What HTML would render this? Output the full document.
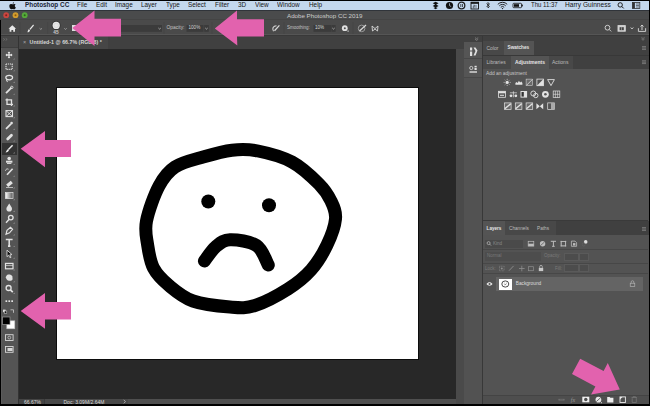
<!DOCTYPE html>
<html><head><meta charset="utf-8">
<style>
*{margin:0;padding:0;box-sizing:border-box}
html,body{width:650px;height:406px;overflow:hidden;background:#000}
body{position:relative;font-family:"Liberation Sans",sans-serif}
.a{position:absolute}
.t{position:absolute;white-space:nowrap;line-height:1;z-index:2}
.top{z-index:3}
.m{font-size:7px;color:#161616;top:1.4px;transform:scaleX(0.91);transform-origin:0 0}
.p{font-size:5px;color:#cfcfcf}
svg{position:absolute;left:0;top:0}
</style></head><body>
<!-- menu bar -->
<div class="a" style="left:0;top:1px;width:649px;height:9px;background:#c4d8ed"></div>
<!-- title bar -->
<div class="a" style="left:0;top:10px;width:649px;height:10px;background:#4a4b4c;border-top:1px solid #30343a;border-bottom:1px solid #444"></div>
<!-- options bar -->
<div class="a" style="left:1px;top:20px;width:648px;height:15px;background:#4a4a4a"></div>
<div class="a" style="left:1px;top:34px;width:648px;height:1px;background:#555"></div>
<div class="a" style="left:1px;top:35px;width:648px;height:1px;background:#393939"></div>
<!-- main area bg -->
<div class="a" style="left:1px;top:36px;width:648px;height:368px;background:#535353"></div>
<!-- toolbar -->
<div class="a" style="left:1px;top:36px;width:17px;height:368px;background:#545454"></div>
<div class="a" style="left:1px;top:48px;width:1px;height:356px;background:#5c5c5c"></div>
<div class="a" style="left:1px;top:36px;width:17px;height:12px;background:#474747;border-bottom:1px solid #3e3e3e"></div>
<div class="a" style="left:18px;top:36px;width:1px;height:368px;background:#333"></div>
<div class="a" style="left:2px;top:143px;width:15px;height:12px;background:#333"></div>
<!-- tab bar -->
<div class="a" style="left:19px;top:36px;width:446px;height:13px;background:#404040"></div>
<div class="a" style="left:19px;top:36px;width:89px;height:13px;background:#464646"></div>
<!-- canvas -->
<div class="a" style="left:19px;top:49px;width:437px;height:350px;background:#282828"></div>
<div class="a" style="left:56px;top:87px;width:363px;height:273px;background:#fff;border:1px solid #0c0c0c"></div>
<!-- status bar -->
<div class="a" style="left:19px;top:399px;width:437px;height:5px;background:#4f4f4f"></div>
<div class="a" style="left:45px;top:399px;width:83px;height:5px;background:#484848"></div>
<div class="a" style="left:19px;top:399px;width:26px;height:5px;background:#444;border-right:1px solid #3a3a3a"></div>
<!-- scroll strip -->
<div class="a" style="left:456px;top:49px;width:8px;height:355px;background:#4a4a4a"></div>
<div class="a" style="left:464px;top:49px;width:1px;height:355px;background:#444"></div>
<!-- icon column -->
<div class="a" style="left:464px;top:36px;width:18px;height:368px;background:#525252"></div>
<div class="a" style="left:464px;top:36px;width:18px;height:6px;background:#404040"></div>
<div class="a" style="left:464px;top:42px;width:18px;height:17px;background:#555;border-bottom:1px solid #484848"></div>
<div class="a" style="left:464px;top:59px;width:18px;height:19px;background:#555;border-bottom:1px solid #484848"></div>
<div class="a" style="left:482px;top:36px;width:1px;height:368px;background:#383838"></div>
<!-- panels -->
<div class="a" style="left:483px;top:36px;width:166px;height:5px;background:#404040"></div>
<!-- color/swatches header -->
<div class="a" style="left:483px;top:41px;width:166px;height:14px;background:#404040"></div>
<div class="a" style="left:483px;top:41px;width:21px;height:14px;background:#484848"></div>
<div class="a" style="left:504px;top:41px;width:30px;height:14px;background:#545454"></div>
<!-- adjustments header -->
<div class="a" style="left:483px;top:55px;width:166px;height:14px;background:#404040;border-top:1px solid #383838"></div>
<div class="a" style="left:483px;top:56px;width:28px;height:13px;background:#484848"></div>
<div class="a" style="left:511px;top:56px;width:38px;height:13px;background:#545454"></div>
<div class="a" style="left:549px;top:56px;width:24px;height:13px;background:#484848"></div>
<!-- adjustments content -->
<div class="a" style="left:483px;top:69px;width:165px;height:152px;background:#535353;border-bottom:1px solid #3a3a3a"></div>
<!-- layers header -->
<div class="a" style="left:483px;top:221px;width:166px;height:14px;background:#404040"></div>
<div class="a" style="left:483px;top:221px;width:22px;height:14px;background:#545454"></div>
<div class="a" style="left:505px;top:221px;width:28px;height:14px;background:#484848"></div>
<div class="a" style="left:533px;top:221px;width:23px;height:14px;background:#484848"></div>
<!-- layers content -->
<div class="a" style="left:483px;top:235px;width:165px;height:160px;background:#535353"></div>
<div class="a" style="left:485px;top:240px;width:38px;height:8px;background:#4a4a4a"></div>
<div class="a" style="left:483px;top:249px;width:165px;height:1px;background:#474747"></div>
<div class="a" style="left:485px;top:252px;width:56px;height:9px;background:#4d4d4d"></div>
<div class="a" style="left:564px;top:252.5px;width:14.5px;height:8px;background:#4c4c4c;border:0.5px solid #5a5a5a"></div>
<div class="a" style="left:579px;top:252.5px;width:9.5px;height:8px;background:#4c4c4c;border:0.5px solid #5a5a5a"></div>
<div class="a" style="left:483px;top:263px;width:165px;height:1px;background:#474747"></div>
<div class="a" style="left:564px;top:264.2px;width:14.5px;height:8px;background:#4c4c4c;border:0.5px solid #5a5a5a"></div>
<div class="a" style="left:579px;top:264.2px;width:9.5px;height:8px;background:#4c4c4c;border:0.5px solid #5a5a5a"></div>
<div class="a" style="left:483px;top:273px;width:165px;height:1px;background:#474747"></div>
<div class="a" style="left:496px;top:277px;width:147px;height:14px;background:#646464"></div>
<div class="a" style="left:498.5px;top:278.5px;width:13.5px;height:11px;background:#fff"></div>
<!-- layers footer -->
<div class="a" style="left:483px;top:395px;width:166px;height:9px;background:#4e4e4e;border-top:1px solid #444"></div>

<!-- ========== TEXT ========== -->
<div class="t m" style="left:24.6px;font-weight:bold;color:#1a2535">Photoshop CC</div>
<div class="t m" style="left:77px">File</div>
<div class="t m" style="left:95.8px">Edit</div>
<div class="t m" style="left:115.2px">Image</div>
<div class="t m" style="left:141.4px">Layer</div>
<div class="t m" style="left:166.4px">Type</div>
<div class="t m" style="left:188.4px">Select</div>
<div class="t m" style="left:215.2px">Filter</div>
<div class="t m" style="left:238px">3D</div>
<div class="t m" style="left:255.2px">View</div>
<div class="t m" style="left:276.8px">Window</div>
<div class="t m" style="left:308.7px">Help</div>
<div class="t m" style="left:531px;transform:scaleX(0.86)">Thu 11:37</div>
<div class="t m" style="left:565px;transform:scaleX(0.94)">Harry Guinness</div>

<div class="t" style="left:287px;top:13.1px;font-size:6.2px;color:#cdcdcd">Adobe Photoshop CC 2019</div>

<div class="t p" style="left:53.3px;top:30.6px;font-size:4.8px;color:#c8c8c8;font-weight:bold">45</div>
<div class="t p" style="left:166.5px;top:25.6px;font-size:4.9px;color:#c4c4c4">Opacity:</div>
<div class="t p" style="left:188.5px;top:25.7px;font-size:4.6px;color:#d8d8d8">100%</div>
<div class="t p" style="left:287.3px;top:25.6px;font-size:4.9px;color:#c4c4c4;transform:scaleX(0.92);transform-origin:0 0">Smoothing:</div>
<div class="t p" style="left:315px;top:25.7px;font-size:4.6px;color:#d8d8d8">10%</div>

<div class="t" style="left:23px;top:39.5px;font-size:5.5px;color:#aaa">×</div>
<div class="t" style="left:29.6px;top:39.7px;font-size:5.3px;font-weight:bold;color:#d6d6d6">Untitled-1 @ 66.7% (RGB/8) *</div>

<div class="t" style="left:24px;top:399.9px;font-size:5px;color:#dadada">66.67%</div>
<div class="t" style="left:63.5px;top:399.9px;font-size:5px;color:#dadada">Doc: 3.09M/2.64M</div>

<div class="t p" style="left:486.5px;top:45.5px;color:#bdbdbd">Color</div>
<div class="t p" style="left:507.5px;top:46.2px;font-weight:bold;color:#e6e6e6;font-size:4.7px">Swatches</div>
<div class="t p" style="left:486.5px;top:59.5px;color:#bdbdbd">Libraries</div>
<div class="t p" style="left:515px;top:60.5px;font-weight:bold;color:#e6e6e6;font-size:4.95px">Adjustments</div>
<div class="t p" style="left:552px;top:59.5px;color:#bdbdbd">Actions</div>
<div class="t p" style="left:486px;top:72.3px;color:#c8c8c8;font-size:4.9px">Add an adjustment</div>

<div class="t p" style="left:486.6px;top:227px;font-weight:bold;color:#e6e6e6;font-size:4.6px">Layers</div>
<div class="t p" style="left:509px;top:227px;color:#bdbdbd;font-size:4.7px">Channels</div>
<div class="t p" style="left:537px;top:227px;color:#bdbdbd;font-size:4.7px">Paths</div>
<div class="t p" style="left:493px;top:241.5px;color:#888;font-size:4.5px">Kind</div>
<div class="t p" style="left:487px;top:254px;color:#7a7a7a;font-size:4.5px">Normal</div>
<div class="t p" style="left:544px;top:254px;color:#7a7a7a;font-size:4.5px">Opacity:</div>
<div class="t p" style="left:485px;top:267px;color:#7a7a7a;font-size:4.5px">Lock:</div>
<div class="t p" style="left:555px;top:267px;color:#7a7a7a;font-size:4.5px">Fill:</div>
<div class="t p" style="left:515.7px;top:282.3px;color:#dcdcdc;font-size:4.8px">Background</div>

<svg width="650" height="406" viewBox="0 0 650 406">
<!-- face -->
<g fill="none" stroke="#000" stroke-width="13" stroke-linecap="round" stroke-linejoin="round">
<path d="M232.0,150.2 C241.0,149.2 248.0,149.0 258.0,151.0 C268.0,153.0 281.8,156.5 292.0,162.0 C302.2,167.5 312.5,177.5 319.0,184.0 C325.5,190.5 328.2,195.2 331.0,201.0 C333.8,206.8 336.2,211.7 335.5,219.0 C334.8,226.3 331.1,236.5 327.0,245.0 C322.9,253.5 317.5,262.7 311.0,270.0 C304.5,277.3 297.3,283.1 288.0,289.0 C278.7,294.9 264.7,302.5 255.0,305.5 C245.3,308.5 240.3,307.8 230.0,307.0 C219.7,306.2 203.2,304.6 193.0,301.0 C182.8,297.4 175.6,291.0 169.0,285.5 C162.4,280.0 157.1,274.9 153.5,268.0 C149.9,261.1 148.7,251.8 147.5,244.0 C146.3,236.2 144.6,230.7 146.5,221.0 C148.4,211.3 154.2,195.0 159.0,186.0 C163.8,177.0 167.5,171.9 175.0,167.0 C182.5,162.1 194.5,159.6 204.0,156.8 C213.5,154.0 223.0,151.2 232.0,150.2 Z"/>
<path d="M204.4,261.0 C206.3,258.6 211.7,250.0 216.0,246.5 C220.3,243.0 223.2,240.0 230.0,239.8 C236.8,239.6 250.1,241.3 256.5,245.5 C262.9,249.7 266.3,261.8 268.3,265.0" stroke-width="13"/>
</g>
<circle cx="208.3" cy="201.5" r="7"/>
<circle cx="269" cy="205.2" r="7"/>
</svg>
<svg width="650" height="406" viewBox="0 0 650 406">
<!-- menu bar icons -->
<g fill="#111">
<path d="M12.6,3.3 C12.9,2.7 13.4,2.3 13.9,2.2 C14,2.8 13.7,3.4 13.2,3.8 Z M10.9,3.9 C11.8,3.9 12.2,4.3 12.7,4.3 C13.2,4.3 13.6,3.9 14.4,3.9 C14.9,3.9 15.4,4.2 15.6,4.6 C14.4,5.2 14.6,7 15.8,7.4 C15.5,8.3 14.9,9.2 14.2,9.2 C13.6,9.2 13.4,8.9 12.8,8.9 C12.1,8.9 11.9,9.2 11.3,9.2 C10.4,9.2 9.3,7.4 9.3,5.9 C9.3,4.7 10,3.9 10.9,3.9 Z"/>
<path d="M432.7,3.2 L435.1,4.6 L432.7,6 L435.6,7.6 L438.6,6 L436.2,4.6 L438.6,3.2 L435.6,1.8 Z M433.6,8.1 L435.6,9.2 L437.6,8.1 L435.6,7 Z"/>
<circle cx="449.5" cy="5.5" r="3.6"/><path d="M449.5,3.3 V5.6 L451.2,6.6" stroke="#c7d9eb" stroke-width="0.7" fill="none"/>
<circle cx="461.5" cy="5.5" r="3.3" fill="none" stroke="#222" stroke-width="1.3"/>
<rect x="460.5" y="4" width="0.7" height="3"/><rect x="462" y="4" width="0.7" height="3"/>
<rect x="471" y="2.2" width="7.5" height="6.8" fill="none" stroke="#111" stroke-width="0.9"/>
<rect x="471" y="2.2" width="7.5" height="1.6"/><path d="M473.2,5.2 h1.5 v1.2 h-1.5 v1.4 h1.5 M476,5 v2.9" fill="none" stroke="#111" stroke-width="0.5"/>
<path d="M486.5,3.5 L489.5,6.5 L488,8 L488,2.5 L489.5,4 L486.5,7" fill="none" stroke="#111" stroke-width="0.7"/>
<path d="M497.8,4.3 A6.5,6.5 0 0 1 507.2,4.3 M499.3,5.8 A4.4,4.4 0 0 1 505.7,5.8 M500.8,7.3 A2.3,2.3 0 0 1 504.2,7.3" fill="none" stroke="#111" stroke-width="0.9"/><circle cx="502.5" cy="8.6" r="0.7"/>
<rect x="513" y="3.3" width="8.5" height="4.4" rx="0.8" fill="none" stroke="#111" stroke-width="0.8"/>
<rect x="514" y="4.2" width="5" height="2.6"/><rect x="521.8" y="4.6" width="1" height="1.8"/>
<circle cx="620.2" cy="4.9" r="2.2" fill="none" stroke="#111" stroke-width="0.9"/>
<path d="M621.7,6.4 L623.7,8.4" stroke="#111" stroke-width="1"/>
<rect x="632.4" y="2.4" width="7.4" height="6" fill="none" stroke="#333" stroke-width="0.8"/>
<rect x="632.4" y="2.4" width="2.5" height="6" fill="#333"/>
<path d="M636,4 h3 M636,5.5 h3 M636,7 h3" stroke="#333" stroke-width="0.6"/>
</g>
<!-- traffic lights -->
<circle cx="6.2" cy="15.2" r="2.9" fill="#c9463f"/><circle cx="6.2" cy="15.2" r="1" fill="#7a2320"/>
<circle cx="15.5" cy="15.2" r="2.9" fill="#d19c2d"/><circle cx="15.5" cy="15.2" r="1" fill="#8a5a10"/>
<circle cx="24.7" cy="15.2" r="2.9" fill="#55a83a"/><circle cx="24.7" cy="15.2" r="1" fill="#2a6418"/>
<!-- options bar -->
<g fill="#e8e8e8">
<path d="M8.5,28.8 L12.3,25.3 L16.1,28.8 L15,28.8 L15,31.8 L13.2,31.8 L13.2,29.9 L11.4,29.9 L11.4,31.8 L9.6,31.8 L9.6,28.8 Z"/>
<path d="M33.2,24.6 L34,25.4 L30.4,29.8 L29.4,28.9 Z M28.9,29.2 L30,30.2 C29.7,31.8 28.5,32.3 27.4,32.2 C27.9,31.3 27.8,29.8 28.9,29.2 Z"/>
<circle cx="56.2" cy="25.4" r="4.6" fill="#363636"/><circle cx="56.2" cy="25.4" r="3.6"/>
</g>
<circle cx="56.2" cy="25.4" r="2.2" fill="none" stroke="#cfcfcf" stroke-width="0.5"/>
<g fill="none" stroke="#bbb" stroke-width="0.7">
<path d="M39.6,28.3 L40.8,29.4 L42,28.3"/>
<path d="M64.3,28.3 L65.5,29.4 L66.7,28.3"/>
</g>
<g fill="#3b3b3b">
<rect x="120" y="25" width="42" height="6.8"/>
<rect x="186.5" y="25" width="17" height="6.8"/>
<rect x="204.2" y="25" width="4.6" height="6.8"/>
<rect x="313.5" y="25" width="17.5" height="6.8"/>
<rect x="331.4" y="25" width="4.2" height="6.8"/>
</g>
<g fill="#454545">
<rect x="19.6" y="22" width="0.8" height="12"/>
<rect x="47.4" y="22" width="0.8" height="12"/>
<rect x="163.6" y="22" width="0.8" height="12"/>
<rect x="211.6" y="22" width="0.8" height="12"/>
<rect x="283.6" y="22" width="0.8" height="12"/>
<rect x="352.6" y="22" width="0.8" height="12"/>
</g>
<g fill="none" stroke="#cfcfcf" stroke-width="0.7">
<path d="M158.4,28 L159.6,29.1 L160.8,28"/>
<path d="M205.3,28 L206.5,29.1 L207.7,28"/>
<path d="M332.3,28 L333.5,29.1 L334.7,28"/>
</g>
<rect x="72" y="25" width="5" height="6" fill="#ddd"/>
<g fill="none" stroke="#d8d8d8" stroke-width="0.9">
<path d="M273.5,31.3 C271.8,28.8 273.2,25.8 276.5,25.8" stroke-width="1.1"/><path d="M274.5,30.8 L279.4,25.4" stroke-width="1.3"/>
<circle cx="344.8" cy="28.2" r="2.9" fill="#e0e0e0" stroke="none"/>
<circle cx="361.6" cy="28.4" r="3.3" stroke="#9a9a9a" stroke-width="1"/><path d="M359.5,31 L366,25" stroke-width="1.2"/>
<path d="M372,26 L375,28.6 L378,26 L377.5,31 L375,29 L372.5,31 Z"/>
<circle cx="607.5" cy="27.7" r="2.4"/>
<path d="M609.3,29.5 L611.2,31.4"/>
<rect x="618" y="25.6" width="7.3" height="5.6" fill="#d0d0d0"/>
<path d="M630.6,27.6 L632,28.8 L633.4,27.6"/>
<path d="M638.4,28.2 L638.4,31.4 L645.6,31.4 L645.6,28.2 M642,30 L642,25 M640.5,26.5 L642,25 L643.5,26.5"/>
</g>
<circle cx="344.8" cy="28.2" r="1" fill="#4c4c4c"/>
<rect x="347.5" y="30.5" width="1.2" height="1.2" fill="#d8d8d8"/>
<rect x="619.6" y="27.2" width="4.2" height="3" fill="#444"/><rect x="621.4" y="27.2" width="0.5" height="3" fill="#ccc"/>
<!-- tab bar / panel collapse -->
<g fill="none" stroke="#999" stroke-width="0.6">
<path d="M3.2,38.3 L4.8,39.4 L3.2,40.5 M5.6,38.3 L7.2,39.4 L5.6,40.5" stroke="#7a7a7a"/>
<path d="M475,37.6 L476.6,38.8 L478.2,37.6 M475,39.2 L476.6,40.4 L478.2,39.2"/>
<path d="M641.5,37.4 L643,38.6 L644.5,37.4 M641.5,39 L643,40.2 L644.5,39"/>
<path d="M642,46.6 h4 M642,48 h4 M642,49.4 h4"/>
<path d="M642,60.8 h4 M642,62.2 h4 M642,63.6 h4"/>
<path d="M642,227.6 h4 M642,229 h4 M642,230.4 h4"/>
</g>
<!-- panel icon column -->
<g fill="#e0e0e0">
<rect x="470" y="47.5" width="2.2" height="3"/><rect x="470" y="51.5" width="2.2" height="4.5"/>
<path d="M473.5,47.5 L475.5,47.5 L477.5,50.5 L475.5,55.5 L473.5,55.5 L475.5,51 Z"/>
<circle cx="471.3" cy="68" r="1.6" fill="none" stroke="#e0e0e0" stroke-width="0.8"/>
<rect x="474.5" y="65.8" width="2.2" height="1.2"/><rect x="474.5" y="67.6" width="2.2" height="2.4"/>
<rect x="469.5" y="71.3" width="7.5" height="1.4"/>
</g>
</svg>
<svg width="650" height="406" viewBox="0 0 650 406" fill="none">
<!-- toolbar icons -->
<path d="M6,55.0 h6 M9,52.0 v6" stroke="#e2e2e2" stroke-width="1.32"/><path d="M5.4,55.0 l1.6,-1.4 v2.8 Z M12.6,55.0 l-1.6,-1.4 v2.8 Z M9,51.4 l-1.4,1.6 h2.8 Z M9,58.6 l-1.4,-1.6 h2.8 Z" fill="#e2e2e2"/><rect x="6" y="64.0" width="6.2" height="5.4" fill="none" stroke="#e2e2e2" stroke-width="1.08" stroke-dasharray="1.2,0.8"/><ellipse cx="9.2" cy="77.6" rx="3.4" ry="2.2" fill="none" stroke="#e2e2e2" stroke-width="1.20"/><path d="M6.8,79.0 q-0.6,1.8 0.8,2.8" fill="none" stroke="#e2e2e2" stroke-width="1.08"/><path d="M6,93.2 L11.5,87.7" stroke="#e2e2e2" stroke-width="1.80"/><circle cx="11.8" cy="87.4" r="1.2" fill="none" stroke="#e2e2e2" stroke-width="0.84"/><path d="M7,98.4 v6 h6 M5.5,99.9 h6 v6" fill="none" stroke="#e2e2e2" stroke-width="1.32"/><rect x="6" y="110.6" width="6.5" height="6" fill="none" stroke="#e2e2e2" stroke-width="1.08"/><path d="M6,110.6 L12.5,116.6 M12.5,110.6 L6,116.6" stroke="#e2e2e2" stroke-width="0.96"/><path d="M6,128.8 L11,123.8" stroke="#e2e2e2" stroke-width="1.68"/><circle cx="11.6" cy="123.1" r="1.3" fill="#e2e2e2"/><rect x="5.5" y="135.7" width="8" height="2.8" rx="1.3" fill="#e2e2e2" transform="rotate(-45 9.5 137.0)"/><path d="M12.6,145.2 L8.4,149.6" stroke="#eee" stroke-width="1.44"/><path d="M8,149.2 L9,150.1 C8.6,151.8 7.4,152.4 5.6,152.4 C6.4,151.4 6.6,149.8 8,149.2 Z" fill="#eee"/><circle cx="9.2" cy="158.5" r="1.8" fill="#e2e2e2"/><rect x="6" y="160.7" width="6.4" height="2" fill="#e2e2e2"/><rect x="7" y="163.1" width="4.4" height="0.9" fill="#e2e2e2"/><path d="M12.6,168.8 L7,174.8" stroke="#e2e2e2" stroke-width="1.68"/><path d="M5.5,170.7 a2,2 0 0 1 3,-1.5" fill="none" stroke="#e2e2e2" stroke-width="0.96"/><rect x="6.5" y="182.3" width="6" height="3.2" fill="#e2e2e2" transform="rotate(-40 9.5 183.9)"/><path d="M6,187.5 h7" stroke="#e2e2e2" stroke-width="0.72"/><defs><linearGradient id="gr"><stop offset="0" stop-color="#fff"/><stop offset="1" stop-color="#555"/></linearGradient></defs><rect x="5.5" y="192.6" width="7.5" height="6" fill="url(#gr)" stroke="#e2e2e2" stroke-width="0.72"/><path d="M9.2,203.6 C10.5,205.9 12,207.4 12,208.8 A2.8,2.8 0 0 1 6.4,208.8 C6.4,207.4 8,205.9 9.2,203.6 Z" fill="#e2e2e2"/><circle cx="10.8" cy="217.6" r="2.3" fill="none" stroke="#e2e2e2" stroke-width="1.32"/><path d="M9.2,219.3 L6,222.7" stroke="#e2e2e2" stroke-width="1.44"/><path d="M6,234.3 L7,230.3 L10.5,227.3 L12.5,229.3 L9.5,232.8 Z" fill="none" stroke="#e2e2e2" stroke-width="1.20"/><path d="M5.8,239.5 h6.8 M9.2,239.5 v6.6 M8,246.1 h2.4" stroke="#e2e2e2" stroke-width="1.56"/><path d="M7,250.2 L7,256.7 L8.6,255.2 L10,257.8 L11,257.3 L9.8,254.8 L12,254.6 Z" fill="#111" stroke="#e2e2e2" stroke-width="0.84"/><rect x="5.5" y="263.4" width="7.5" height="5.4" fill="none" stroke="#e2e2e2" stroke-width="1.20"/><path d="M5.5,265.4 h7.5" stroke="#e2e2e2" stroke-width="0.72"/><path d="M6.5,275.7 C7,274.1 11,273.7 12.4,276.2 L12.6,279.2 C12,281.3 8,281.5 6.6,279.2 L5.6,277.3 Z" fill="#e2e2e2"/><circle cx="8.6" cy="288.0" r="2.5" fill="none" stroke="#e2e2e2" stroke-width="1.32"/><path d="M10.4,289.8 L12.8,292.2" stroke="#e2e2e2" stroke-width="1.68"/><rect x="5.5" y="300.3" width="1.7" height="1.7" fill="#e2e2e2"/><rect x="8.4" y="300.3" width="1.7" height="1.7" fill="#e2e2e2"/><rect x="11.3" y="300.3" width="1.7" height="1.7" fill="#e2e2e2"/>
<path d="M13.2,59.6 L14.6,58.2 L14.6,59.6 Z" fill="#9a9a9a"/><path d="M13.2,71.3 L14.6,69.9 L14.6,71.3 Z" fill="#9a9a9a"/><path d="M13.2,83.0 L14.6,81.6 L14.6,83.0 Z" fill="#9a9a9a"/><path d="M13.2,94.8 L14.6,93.4 L14.6,94.8 Z" fill="#9a9a9a"/><path d="M13.2,106.5 L14.6,105.1 L14.6,106.5 Z" fill="#9a9a9a"/><path d="M13.2,118.2 L14.6,116.8 L14.6,118.2 Z" fill="#9a9a9a"/><path d="M13.2,129.9 L14.6,128.5 L14.6,129.9 Z" fill="#9a9a9a"/><path d="M13.2,141.6 L14.6,140.2 L14.6,141.6 Z" fill="#9a9a9a"/><path d="M13.2,153.4 L14.6,152.0 L14.6,153.4 Z" fill="#9a9a9a"/><path d="M13.2,165.1 L14.6,163.7 L14.6,165.1 Z" fill="#9a9a9a"/><path d="M13.2,176.8 L14.6,175.4 L14.6,176.8 Z" fill="#9a9a9a"/><path d="M13.2,188.5 L14.6,187.1 L14.6,188.5 Z" fill="#9a9a9a"/><path d="M13.2,200.2 L14.6,198.8 L14.6,200.2 Z" fill="#9a9a9a"/><path d="M13.2,212.0 L14.6,210.6 L14.6,212.0 Z" fill="#9a9a9a"/><path d="M13.2,223.7 L14.6,222.3 L14.6,223.7 Z" fill="#9a9a9a"/><path d="M13.2,235.4 L14.6,234.0 L14.6,235.4 Z" fill="#9a9a9a"/><path d="M13.2,247.1 L14.6,245.7 L14.6,247.1 Z" fill="#9a9a9a"/><path d="M13.2,258.8 L14.6,257.4 L14.6,258.8 Z" fill="#9a9a9a"/><path d="M13.2,270.6 L14.6,269.2 L14.6,270.6 Z" fill="#9a9a9a"/><path d="M13.2,282.3 L14.6,280.9 L14.6,282.3 Z" fill="#9a9a9a"/><path d="M13.2,294.0 L14.6,292.6 L14.6,294.0 Z" fill="#9a9a9a"/>
<!-- fg/bg -->
<path d="M123.8,399.8 L125.4,401.6 L123.8,403.4" stroke="#bbb" stroke-width="0.8" fill="none"/>
<rect x="3" y="309.6" width="2.6" height="2.6" fill="#ddd"/><rect x="4.4" y="311" width="2.4" height="2.4" fill="#111" stroke="#ddd" stroke-width="0.5"/>
<path d="M10.5,309.8 h3 v3" stroke="#ccc" stroke-width="0.8"/>
<rect x="6.8" y="320.8" width="8" height="8" fill="#fff" stroke="#bbb" stroke-width="0.6"/>
<rect x="2.4" y="317" width="7.6" height="7.4" fill="#000" stroke="#999" stroke-width="0.7"/>
<rect x="5.5" y="334.7" width="7.6" height="5.8" stroke="#d6d6d6" stroke-width="0.9"/><circle cx="9.3" cy="337.6" r="1.4" stroke="#d6d6d6" stroke-width="0.7"/>
<rect x="5.5" y="346.5" width="7.6" height="5.8" stroke="#d6d6d6" stroke-width="0.9"/><rect x="7.5" y="348" width="5" height="3" fill="#d6d6d6"/>
</svg>
<svg width="650" height="406" viewBox="0 0 650 406" fill="none">
<circle cx="507.2" cy="82.4" r="1.6" fill="#e2e2e2"/>
<path d="M509.6,82.4 L510.8,82.4" stroke="#e2e2e2" stroke-width="0.6"/>
<path d="M508.9,84.1 L509.7,84.9" stroke="#e2e2e2" stroke-width="0.6"/>
<path d="M507.2,84.8 L507.2,86.0" stroke="#e2e2e2" stroke-width="0.6"/>
<path d="M505.5,84.1 L504.7,84.9" stroke="#e2e2e2" stroke-width="0.6"/>
<path d="M504.8,82.4 L503.6,82.4" stroke="#e2e2e2" stroke-width="0.6"/>
<path d="M505.5,80.7 L504.7,79.9" stroke="#e2e2e2" stroke-width="0.6"/>
<path d="M507.2,80.0 L507.2,78.8" stroke="#e2e2e2" stroke-width="0.6"/>
<path d="M508.9,80.7 L509.7,79.9" stroke="#e2e2e2" stroke-width="0.6"/>
<path d="M515.4,84.80000000000001 L515.4,82.9 L516.6,81.9 L517.6999999999999,83.0 L518.9,80.80000000000001 L520.1,82.60000000000001 L521.3,81.60000000000001 L522.4,83.0 L522.4,84.80000000000001 Z" fill="#e2e2e2"/>
<rect x="526.1" y="79.10000000000001" width="6.6" height="6.6" fill="#6a6a6a" stroke="#e2e2e2" stroke-width="0.5"/><path d="M526.4,85.4 C528.4,83.4 530.4,81.4 532.4,79.4" stroke="#e2e2e2" stroke-width="0.8"/>
<rect x="536.9000000000001" y="79.10000000000001" width="6.6" height="6.6" fill="none" stroke="#e2e2e2" stroke-width="0.8"/><path d="M536.9000000000001,85.7 L543.5,79.10000000000001 L543.5,85.7 Z" fill="#e2e2e2"/>
<path d="M547.6,79.60000000000001 L554.4,79.60000000000001 L551,85.60000000000001 Z" fill="none" stroke="#e2e2e2" stroke-width="0.9"/>
<rect x="498.5" y="91.3" width="7" height="6" fill="none" stroke="#e2e2e2" stroke-width="0.8"/><rect x="498.5" y="91.3" width="7" height="2" fill="#e2e2e2"/><rect x="500" y="94.8" width="4" height="1" fill="#e2e2e2"/>
<path d="M509.9,92.8 h7 M513.4,91.3 v6" stroke="#e2e2e2" stroke-width="0.7"/><circle cx="511.0" cy="95.8" r="1.4" fill="#e2e2e2"/><circle cx="515.8" cy="95.8" r="1.4" fill="#e2e2e2"/>
<rect x="520.5" y="91.0" width="6.6" height="6.6" fill="#e2e2e2"/><rect x="521.5" y="92.0" width="2.3" height="4.6" fill="#333"/>
<circle cx="533.3" cy="93.5" r="2.5" fill="none" stroke="#e2e2e2" stroke-width="0.9"/><circle cx="535.8" cy="95.5" r="2.2" fill="none" stroke="#e2e2e2" stroke-width="0.9"/>
<circle cx="545.4" cy="94.3" r="3.4" fill="#e2e2e2"/><circle cx="545.4" cy="94.3" r="1.3" fill="#555"/>
<rect x="553.2" y="91.0" width="6.6" height="6.6" fill="none" stroke="#e2e2e2" stroke-width="0.7"/><path d="M555.4,91.0 v6.6 M557.6,91.0 v6.6 M553.2,94.3 h6.6" stroke="#e2e2e2" stroke-width="0.6"/>
<rect x="504.5" y="102.9" width="6.6" height="6.6" fill="#6a6a6a" stroke="#e2e2e2" stroke-width="0.7"/><path d="M504.8,108.7 L510.8,103.7" stroke="#e2e2e2" stroke-width="1.4"/>
<rect x="515.3000000000001" y="102.9" width="6.6" height="6.6" fill="#6a6a6a" stroke="#e2e2e2" stroke-width="0.7"/><path d="M515.6,108.7 L521.6,103.7" stroke="#e2e2e2" stroke-width="1.4"/>
<rect x="526.1" y="102.9" width="6.6" height="6.6" fill="#6a6a6a" stroke="#e2e2e2" stroke-width="0.7"/><path d="M526.4,108.7 L532.4,103.7" stroke="#e2e2e2" stroke-width="1.4"/>
<path d="M536.4,103.2 L539.8,106.2 L543.1999999999999,103.2 L543.1999999999999,109.2 L539.8,106.2 L536.4,109.2 Z" fill="#e2e2e2"/>
<rect x="547.7" y="102.9" width="6.6" height="6.6" fill="none" stroke="#e2e2e2" stroke-width="0.7"/><rect x="551" y="102.9" width="3.3" height="6.6" fill="#aaa"/>
<circle cx="488.6" cy="243.1" r="1.5" stroke="#bdbdbd" stroke-width="0.7" fill="none"/><path d="M489.7,244.2 L491,245.5" stroke="#bdbdbd" stroke-width="0.8"/>
<rect x="528.2" y="241.29999999999998" width="5.6" height="4.8" fill="none" stroke="#bdbdbd" stroke-width="0.7"/><rect x="528.2" y="243.7" width="5.6" height="2.4" fill="#bdbdbd"/>
<circle cx="542.6" cy="243.7" r="2.7" fill="#bdbdbd"/><path d="M540.6,245.5 L544.6,241.89999999999998" stroke="#555" stroke-width="0.7"/>
<path d="M550.8,241.29999999999998 h5.2 M553.4,241.29999999999998 v5 M552.1,246.29999999999998 h2.6" stroke="#bdbdbd" stroke-width="1"/>
<rect x="561.1999999999999" y="241.5" width="4.4" height="4.4" fill="none" stroke="#bdbdbd" stroke-width="0.8"/><path d="M560.4,241.5 h6 M560.4,245.89999999999998 h6 M561.1999999999999,240.7 v6 M565.6,240.7 v6" stroke="#bdbdbd" stroke-width="0.5"/>
<path d="M571.4,246.29999999999998 L571.4,241.1 L575,241.1 L576.6,242.7 L576.6,246.29999999999998 Z" fill="none" stroke="#bdbdbd" stroke-width="0.8"/><rect x="573" y="243.1" width="2.4" height="2.4" fill="#bdbdbd"/>
<circle cx="585.7" cy="241.89999999999998" r="1.8" fill="#ddd"/><rect x="582.2" y="242.7" width="3" height="3.4" rx="1.6" fill="none" stroke="#666" stroke-width="0.5"/>
<rect x="499.5" y="266.2" width="4.6" height="4.6" fill="none" stroke="#8e8e8e" stroke-width="0.6" stroke-dasharray="0.9,0.6"/><circle cx="501.8" cy="268.5" r="1" fill="#8e8e8e"/>
<path d="M513.6,265.9 L509,270.7" stroke="#8e8e8e" stroke-width="0.9"/>
<path d="M519.0,268.5 h5.6 M521.8,265.7 v5.6" stroke="#8e8e8e" stroke-width="0.8"/>
<rect x="528.5" y="266.7" width="5" height="4" fill="none" stroke="#8e8e8e" stroke-width="0.7"/>
<rect x="538.8" y="267.9" width="4.4" height="3.2" fill="#c8c8c8"/><path d="M539.7,267.9 v-1.2 a1.3,1.3 0 0 1 2.6,0 v1.2" fill="none" stroke="#c8c8c8" stroke-width="0.7"/>
<path d="M486.5,284 C488,281.8 491,281.8 492.5,284 C491,286.2 488,286.2 486.5,284 Z" fill="#e8e8e8"/><circle cx="489.5" cy="284" r="1" fill="#555"/>
<ellipse cx="505.3" cy="284" rx="3.5" ry="3.1" fill="none" stroke="#000" stroke-width="0.7"/><circle cx="504.2" cy="283" r="0.35" fill="#000"/><circle cx="506.4" cy="283.1" r="0.35" fill="#000"/><path d="M504.4,284.8 q0.9,-0.8 1.8,0" stroke="#000" stroke-width="0.5"/>
<rect x="630.2" y="283.2" width="4.6" height="3.4" fill="none" stroke="#bbb" stroke-width="0.6"/><path d="M631.2,283.2 v-1.2 a1.3,1.3 0 0 1 2.6,0 v1.2" fill="none" stroke="#bbb" stroke-width="0.6"/>
<path d="M558.5,399.7 h6" stroke="#777" stroke-width="1.6"/><path d="M559.5,399.7 h4" stroke="#4e4e4e" stroke-width="0.6"/>
<text x="570.8" y="401.9" font-family="Liberation Serif" font-style="italic" font-size="6" fill="#9a9a9a">fx</text>
<rect x="582.3" y="396.7" width="7" height="5.6" fill="#f0f0f0"/><circle cx="585.8" cy="399.5" r="1.7" fill="#4e4e4e"/>
<circle cx="598.4" cy="399.7" r="2.9" fill="#e8e8e8"/><path d="M596.2,401.7 L600.6,397.7" stroke="#4e4e4e" stroke-width="0.8"/><circle cx="601.5" cy="402.7" r="0.6" fill="#ccc"/>
<path d="M607.2,402.5 L607.2,396.9 L609.6,396.9 L610.3,397.7 L613.4,397.7 L613.4,402.5 Z" fill="#ececec"/>
<rect x="620" y="396.9" width="5.4" height="5.6" fill="none" stroke="#ececec" stroke-width="0.9"/><path d="M620,396.9 L622.5,396.9 L620,399.4 Z" fill="#ececec"/>
<path d="M631.5,397.5 h5.5 M633,397.5 v-0.8 h2.5 v0.8 M632.2,398.2 v4.3 h4.1 v-4.3" fill="none" stroke="#7a7a7a" stroke-width="0.7"/>
</svg>
<svg class="top" width="650" height="406" viewBox="0 0 650 406">
<!-- arrows -->
<g fill="#e262ae">
<polygon points="72.3,28 94.5,10.5 94.5,18.8 121,18.8 121,36.4 94.5,36.4 94.5,46"/>
<polygon points="214.8,28.4 237,10.5 237,19.2 264,19.2 264,36.4 237,36.4 237.3,45.6"/>
<polygon points="20.7,148.8 45,131 45,140 71,140 71,157 45,157 45,167.3"/>
<polygon points="20.7,311 45,293 45,302 71,302 71,319.6 45,319.6 45,328.8"/>
<polygon points="619.8,389.6 607.8,363.1 603.6,371.1 580.2,358.7 572.0,374.0 595.4,386.5 591.1,394.5"/>
</g>
</svg>
</body></html>
